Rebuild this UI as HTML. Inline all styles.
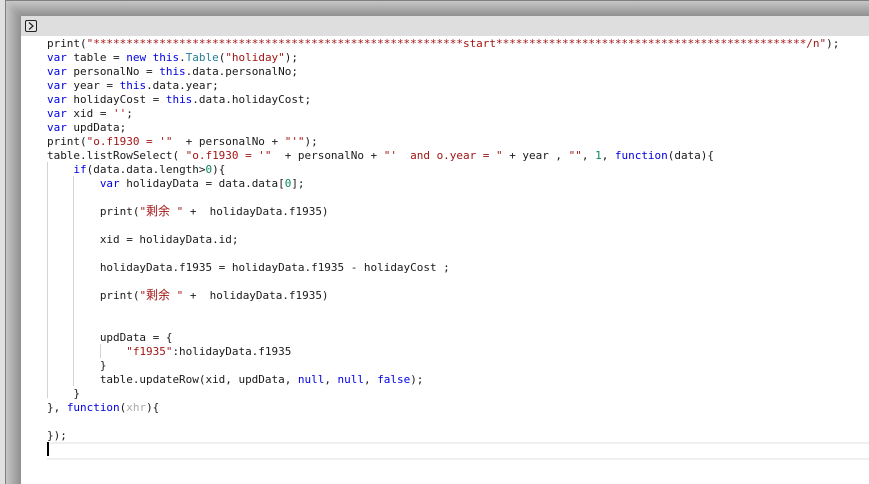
<!DOCTYPE html>
<html><head><meta charset="utf-8"><style>
html,body{margin:0;padding:0;width:869px;height:484px;overflow:hidden;background:#e1e1e1}
#frame{position:absolute;left:5px;top:0;width:864px;height:484px;background:#fff;overflow:hidden}
#lineT{position:absolute;left:5px;top:0;width:864px;height:1px;background:#808080}
#lineL{position:absolute;left:5px;top:0;width:1px;height:484px;background:#808080}
#gradT{position:absolute;left:6px;top:1px;width:863px;height:15px;background:linear-gradient(#c6c6c6,#909090);clip-path:polygon(0 0,100% 0,100% 100%,15px 100%)}
#gradL{position:absolute;left:6px;top:1px;width:15px;height:483px;background:linear-gradient(90deg,#c6c6c6,#909090);clip-path:polygon(0 0,100% 15px,100% 100%,0 100%)}
#bar{position:absolute;left:21px;top:16px;width:848px;height:20px;background:#dedede}
#btn{position:absolute;left:25px;top:20px;width:10px;height:10px;border:1px solid #222;border-radius:2px;background:#e4e4e4}
#content{position:absolute;left:21px;top:36px;width:848px;height:448px;background:#fff}
#code{position:absolute;left:47px;top:37px;margin:0;font:11px/14px "DejaVu Sans Mono","Liberation Mono","Noto Sans CJK SC",monospace;color:#1a1a1a;white-space:pre;letter-spacing:-.02px}
.k{color:#0000e6}.s{color:#a31515}.t{color:#267f99}.n{color:#098658}.g{color:#aaa}
.c{font-family:"Noto Sans CJK SC",sans-serif;font-size:12px;line-height:0;display:inline-block;width:12px;color:#a31515}
.guide{position:absolute;width:1px;background:#d3d3d3}
#cur{position:absolute;left:47px;top:442px;width:822px;height:14px;border-top:2px solid #efefef;border-bottom:2px solid #efefef}
#caret{position:absolute;left:47px;top:442px;width:2px;height:14px;background:#000}
</style></head><body>
<div id="frame"></div>
<div id="gradT"></div><div id="gradL"></div>
<div id="lineT"></div><div id="lineL"></div>
<div id="bar"></div>
<div id="btn"><svg width="10" height="10" style="display:block"><path d="M3 1.5L7 5L3 8.5" fill="none" stroke="#222" stroke-width="1.2"/></svg></div>
<div id="content"></div>
<div class="guide" style="left:47px;top:162px;height:236px"></div>
<div class="guide" style="left:73px;top:176px;height:210px"></div>
<div class="guide" style="left:100px;top:344px;height:14px"></div>
<div id="cur"></div><div id="caret"></div>
<pre id="code">print(<span class="s">"********************************************************start***********************************************/n"</span>);
<span class="k">var</span> table = <span class="k">new</span> <span class="k">this</span>.<span class="t">Table</span>(<span class="s">"holiday"</span>);
<span class="k">var</span> personalNo = <span class="k">this</span>.data.personalNo;
<span class="k">var</span> year = <span class="k">this</span>.data.year;
<span class="k">var</span> holidayCost = <span class="k">this</span>.data.holidayCost;
<span class="k">var</span> xid = <span class="s">''</span>;
<span class="k">var</span> updData;
print(<span class="s">"o.f1930 = '"</span>  + personalNo + <span class="s">"'"</span>);
table.listRowSelect( <span class="s">"o.f1930 = '"</span>  + personalNo + <span class="s">"'  and o.year = "</span> + year , <span class="s">""</span>, <span class="n">1</span>, <span class="k">function</span>(data){
    <span class="k">if</span>(data.data.length&gt;<span class="n">0</span>){
        <span class="k">var</span> holidayData = data.data[<span class="n">0</span>];

        print(<span class="s">"<span class="c">剩</span><span class="c">余</span> "</span> +  holidayData.f1935)

        xid = holidayData.id;

        holidayData.f1935 = holidayData.f1935 - holidayCost ;

        print(<span class="s">"<span class="c">剩</span><span class="c">余</span> "</span> +  holidayData.f1935)


        updData = {
            <span class="s">"f1935"</span>:holidayData.f1935
        }
        table.updateRow(xid, updData, <span class="k">null</span>, <span class="k">null</span>, <span class="k">false</span>);
    }
}, <span class="k">function</span>(<span class="g">xhr</span>){

});</pre>
</body></html>
